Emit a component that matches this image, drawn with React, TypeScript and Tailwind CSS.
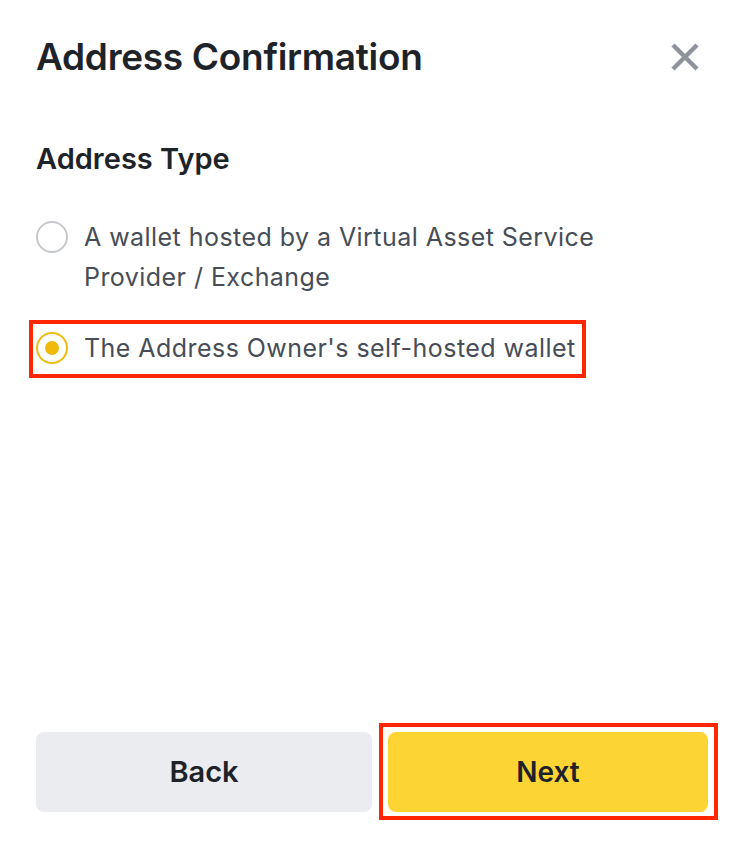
import { useState } from "react";

const options = [
  { id: "vasp", label: "A wallet hosted by a Virtual Asset Service Provider / Exchange" },
  { id: "self", label: "The Address Owner's self-hosted wallet" },
];

const Radio = ({ checked }: { checked: boolean }) => (
  <span
    className={`mt-[4px] flex size-[32px] shrink-0 items-center justify-center rounded-full border-2 ${
      checked ? "border-[#f0b90b]" : "border-[#c5c8cc]"
    }`}
  >
    {checked && <span className="size-[14px] rounded-full bg-[#f0b90b]" />}
  </span>
);

export default function App() {
  const [selected, setSelected] = useState("self");

  return (
    <div
      className="flex h-[848px] w-[752px] flex-col bg-white pl-[36px] pr-[44px] pt-[37px] pb-[36px] text-[#1e2329]"
      style={{ fontFamily: "Inter, 'Noto Sans', sans-serif" }}
    >
      {/* header */}
      <div className="flex items-center justify-between">
        <h1 className="text-[37px] font-semibold leading-[40px] tracking-[-0.3px]">Address Confirmation</h1>
        <button className="mr-[8px] flex size-[30px] items-center justify-center text-[#8e939b]">
          <svg width="30" height="30" viewBox="0 0 30 30" fill="none">
            <path d="M3 3L27 27M27 3L3 27" stroke="currentColor" strokeWidth="4.5" />
          </svg>
        </button>
      </div>

      <h2 className="mt-[64px] text-[29px] font-semibold leading-[36px]">Address Type</h2>

      <div className="mt-[40px] flex flex-col gap-[31px]">
        {options.map((opt) => {
          const checked = selected === opt.id;
          return (
            <div key={opt.id} className="relative self-start">
              {checked && (
                <span className="pointer-events-none absolute -left-[7px] -top-[8px] -bottom-[10px] -right-[10px] border-[4px] border-[#ff2600]" />
              )}
              <button
                onClick={() => setSelected(opt.id)}
                className="flex items-start gap-[16px] text-left"
              >
                <Radio checked={checked} />
                <span className="max-w-[540px] text-[25px] leading-[40px] tracking-[0.45px] text-[#474d57]">
                  {opt.label}
                </span>
              </button>
            </div>
          );
        })}
      </div>

      <div className="flex-1" />

      <div className="flex gap-[16px]">
        <button className="h-[80px] w-[336px] rounded-[8px] bg-[#eaecef] text-[29px] font-semibold">Back</button>
        <div className="relative">
          <span className="pointer-events-none absolute -left-[9px] -top-[9px] -right-[10px] -bottom-[8px] border-[4px] border-[#ff2600]" />
          <button className="h-[80px] w-[320px] rounded-[8px] bg-[#fcd535] text-[28px] font-semibold">Next</button>
        </div>
      </div>
    </div>
  );
}
